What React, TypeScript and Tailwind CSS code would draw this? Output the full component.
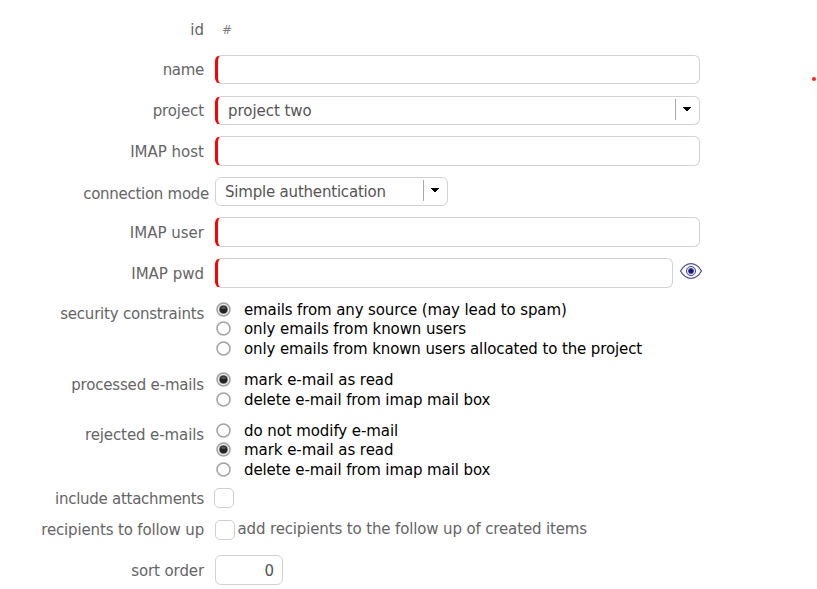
import type { ReactNode } from "react";

function Row({ label, row, labelClass, children }: { label: string; row: string; labelClass: string; children: ReactNode }) {
  return (
    <div className={`flex items-start ${row}`}>
      <div className="flex w-[215px] shrink-0 justify-end pr-[11px]">
        <span className={`whitespace-nowrap text-[#656565] ${labelClass}`}>{label}</span>
      </div>
      {children}
    </div>
  );
}

const box = "flex shrink-0 rounded-[6px] border border-[#d2d2d2] bg-white text-[#555]";
const required = "border-l-[3px] border-l-[#ff0000]";

function Arrow() {
  return (
    <span className="ml-auto flex h-[21px] items-start border-l border-[#aaa] pl-[7px] pt-[8px]">
      <svg width="8" height="4" viewBox="0 0 8 4" shapeRendering="crispEdges">
        <path d="M0 0h8v1H7v1H6v1H5v1H3V3H2V2H1V1H0z" fill="#000" />
      </svg>
    </span>
  );
}

function Radio({ checked, text, height = "h-[19.6px]", className }: { checked?: boolean; text: string; height?: string; className: string }) {
  return (
    <div className={`flex items-center ${height}`}>
      <svg width="16" height="16" viewBox="0 0 16 16" className="mr-[13px] shrink-0">
        <circle cx="8.5" cy="7.5" r="7" fill="#fff" stroke="#dedede" strokeWidth="1.2" />
        <circle cx="8.5" cy="7.5" r="6.4" fill={checked ? "#ececec" : "#fff"} stroke="#a0a0a0" strokeWidth="1.3" />
        {checked && (
          <>
            <circle cx="8.5" cy="7.5" r="4.5" fill="#888" />
            <circle cx="8.5" cy="7.5" r="3.8" fill="#222" />
            <ellipse cx="8.5" cy="5.8" rx="2.4" ry="1.2" fill="#555" />
          </>
        )}
      </svg>
      <span className={`whitespace-nowrap leading-5 text-black ${className}`}>{text}</span>
    </div>
  );
}

function Check() {
  return <span className="h-5 w-5 shrink-0 rounded-[5px] border border-[#d0d0d0] bg-white" />;
}

export default function App() {
  return (
    <div className="relative h-[589px] w-[817px] overflow-hidden bg-white pt-[15px] font-['Verdana','DejaVu_Sans',sans-serif] text-[15px] leading-5">
      <Row label="id" row="h-10" labelClass="mt-[5px]">
        <span className="ml-[7px] mt-[5px] text-[12px] text-[#808080]">#</span>
      </Row>
      <Row label="name" row="h-[41px]" labelClass="mt-[5px] tracking-[-0.3px]">
        <div className={`${box} ${required} h-[29px] w-[485px]`} />
      </Row>
      <Row label="project" row="h-10" labelClass="mt-[5px] tracking-[-0.1px]">
        <div className={`${box} ${required} h-[29px] w-[485px] pl-[10px] pr-[8px] pt-[2px]`}>
          <span className="mt-[2px] tracking-[-0.05px]">project two</span>
          <Arrow />
        </div>
      </Row>
      <Row label="IMAP host" row="h-[41px]" labelClass="mt-[6px]">
        <div className={`${box} ${required} h-[30px] w-[485px]`} />
      </Row>
      <Row label="connection mode" row="h-10" labelClass="-mr-[5px] mt-[7px] tracking-[-0.28px]">
        <div className={`${box} h-[29px] w-[233px] pl-[9px] pr-[8px] pt-[2px]`}>
          <span className="mt-[2px] tracking-[-0.2px]">Simple authentication</span>
          <Arrow />
        </div>
      </Row>
      <Row label="IMAP user" row="h-[41px]" labelClass="mt-[6px]">
        <div className={`${box} ${required} h-[30px] w-[485px]`} />
      </Row>
      <Row label="IMAP pwd" row="h-[42px]" labelClass="mt-[6px]">
        <div className={`${box} ${required} h-[30px] w-[458px]`} />
        <svg width="24" height="18" viewBox="0 0 24 18" className="ml-[6px] mt-[4px]" fill="none" stroke="#5050a0">
          <path d="M1.5 9C4.5 4 7.500 1.700 12 1.700S19.500 4 22.500 9C19.500 14 16.500 16.300 12 16.300S4.500 14 1.500 9Z" strokeWidth="1.3" />
          <circle cx="12" cy="9" r="4.600" fill="#d6d6ea" strokeWidth="1" />
          <circle cx="12" cy="9" r="2.500" fill="#171770" stroke="#33338b" strokeWidth="0.700" />
        </svg>
      </Row>
      <Row label="security constraints" row="h-[70px]" labelClass="mt-[4px] tracking-[-0.21px]">
        <div>
          <Radio checked text="emails from any source (may lead to spam)" className="tracking-[-0.12px]" />
          <Radio text="only emails from known users" className="tracking-[-0.09px]" />
          <Radio text="only emails from known users allocated to the project" className="tracking-[-0.115px]" />
        </div>
      </Row>
      <Row label="processed e-mails" row="h-[51px]" labelClass="mt-[5px] tracking-[-0.17px]">
        <div>
          <Radio checked text="mark e-mail as read" height="h-5" className="tracking-[-0.06px]" />
          <Radio text="delete e-mail from imap mail box" height="h-5" className="tracking-[-0.1px]" />
        </div>
      </Row>
      <Row label="rejected e-mails" row="h-[67px]" labelClass="mt-[4px] tracking-[-0.1px]">
        <div>
          <Radio text="do not modify e-mail" className="tracking-[-0.08px]" />
          <Radio checked text="mark e-mail as read" className="tracking-[-0.06px]" />
          <Radio text="delete e-mail from imap mail box" className="tracking-[-0.1px]" />
        </div>
      </Row>
      <Row label="include attachments" row="h-8" labelClass="mt-[1px] tracking-[-0.27px]">
        <div className="-ml-px flex"><Check /></div>
      </Row>
      <Row label="recipients to follow up" row="h-[35px]" labelClass="tracking-[-0.15px]">
        <Check />
        <span className="-mt-px ml-[2.5px] whitespace-nowrap tracking-[-0.14px] text-[#656565]">add recipients to the follow up of created items</span>
      </Row>
      <Row label="sort order" row="h-[30px]" labelClass="mt-[6px] tracking-[-0.1px]">
        <div className={`${box} h-[30px] w-[68px] justify-end pr-[8px] pt-[5px]`}>0</div>
      </Row>
      <span className="absolute left-[812px] top-[77px] h-1 w-1 rounded-full bg-[#f22]" />
    </div>
  );
}
